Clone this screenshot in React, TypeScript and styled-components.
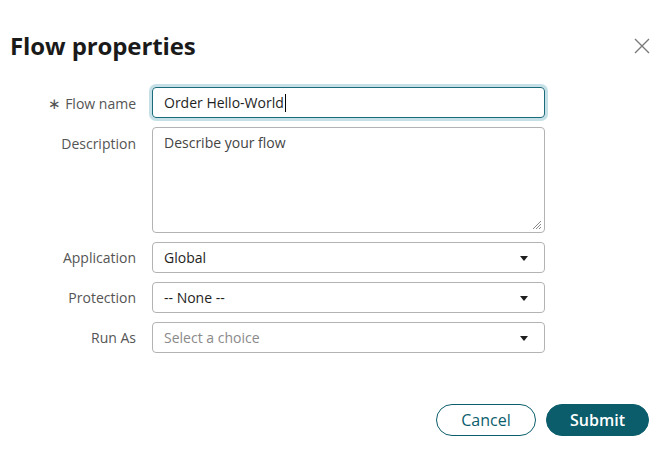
import React from "react";
import styled, {createGlobalStyle} from "styled-components";

const GlobalStyle = createGlobalStyle`
  body {
    margin: 0;
    background: #ffffff;
    font-family: 'Open Sans', 'Liberation Sans', sans-serif;
    color: #1e1e1e;
  }
`

const Dialog = styled.div`
  width: 669px;
  height: 456px;
  box-sizing: border-box;
  padding: 30px 20px 0 10px;
  display: flex;
  flex-direction: column;
`

const Header = styled.div`
  display: flex;
  justify-content: space-between;
  align-items: center;
  height: 30px;
`

const Title = styled.h1`
  margin: 0;
  font-size: 24px;
  font-weight: 700;
  color: #1a1a1a;
  letter-spacing: -0.1px;
`

const CloseButton = styled.button`
  border: none;
  background: transparent;
  padding: 0;
  width: 16px;
  height: 16px;
  margin-top: 2px;
  margin-right: -1px;
  cursor: pointer;
  display: flex;
`

const Form = styled.div`
  display: grid;
  grid-template-columns: 126px 393px;
  column-gap: 16px;
  row-gap: 9px;
  margin-top: 27px;
`

const Label = styled.label<{$top?: boolean}>`
  font-size: 14px;
  color: #555;
  text-align: right;
  align-self: ${p => p.$top ? 'start' : 'center'};
  padding-top: ${p => p.$top ? '7px' : '0'};
`

const Star = styled.span`
  font-size: 15px;
  margin-right: 4px;
  color: #555;
`

const TextInput = styled.div<{$focused?: boolean}>`
  height: 31px;
  box-sizing: border-box;
  border: 1px solid ${p => p.$focused ? '#1b6b7a' : '#b3b3b3'};
  border-radius: 4px;
  box-shadow: ${p => p.$focused ? '0 0 0 3px rgba(90, 170, 185, 0.35)' : 'none'};
  display: flex;
  align-items: center;
  padding: 0 11px;
  font-size: 14px;
  color: #1e1e1e;
`

const Caret = styled.span`
  display: inline-block;
  width: 1px;
  height: 18px;
  background: #000;
  margin-left: 1px;
`

const TextArea = styled.div`
  height: 106px;
  box-sizing: border-box;
  border: 1px solid #b3b3b3;
  border-radius: 4px;
  padding: 5px 11px;
  font-size: 14px;
  color: #444;
  position: relative;
`

const Grip = styled.svg`
  position: absolute;
  right: 2px;
  bottom: 2px;
`

const Select = styled.div<{$placeholder?: boolean}>`
  height: 31px;
  box-sizing: border-box;
  border: 1px solid #b3b3b3;
  border-radius: 4px;
  display: flex;
  align-items: center;
  justify-content: space-between;
  padding: 0 16px 0 11px;
  font-size: 14px;
  color: ${p => p.$placeholder ? '#8a8a8a' : '#1e1e1e'};
`

const Arrow = styled.span`
  width: 0;
  height: 0;
  border-left: 4.5px solid transparent;
  border-right: 4.5px solid transparent;
  border-top: 5px solid #1e1e1e;
  margin-top: 2px;
`

const Footer = styled.div`
  display: flex;
  justify-content: flex-end;
  gap: 10px;
  margin-top: 51px;
`

const Button = styled.button<{$primary?: boolean}>`
  height: 32px;
  box-sizing: border-box;
  padding: 0 23px;
  border-radius: 16px;
  font-family: 'Open Sans', 'Liberation Sans', sans-serif;
  font-size: 16px;
  font-weight: ${p => p.$primary ? 600 : 400};
  border: 1px solid #0b5d6c;
  background: ${p => p.$primary ? '#0b5d6c' : '#ffffff'};
  color: ${p => p.$primary ? '#ffffff' : '#0b5d6c'};
  cursor: pointer;
  min-width: ${p => p.$primary ? '103px' : '100px'};
`

const App = () => {
  return (
    <>
      <GlobalStyle/>
      <Dialog>
        <Header>
          <Title>Flow properties</Title>
          <CloseButton aria-label="Close">
            <svg width="16" height="16" viewBox="0 0 16 16">
              <path d="M1 1 L15 15 M15 1 L1 15" stroke="#7a7a7a" strokeWidth="1.4" fill="none"/>
            </svg>
          </CloseButton>
        </Header>

        <Form>
          <Label><Star>∗</Star>Flow name</Label>
          <TextInput $focused>Order Hello-World<Caret/></TextInput>

          <Label $top>Description</Label>
          <TextArea>
            Describe your flow
            <Grip width="10" height="10" viewBox="0 0 10 10">
              <path d="M9 1 L1 9 M9 4 L4 9 M9 7 L7 9" stroke="#8a8a8a" strokeWidth="1" fill="none"/>
            </Grip>
          </TextArea>

          <Label>Application</Label>
          <Select>Global<Arrow/></Select>

          <Label>Protection</Label>
          <Select>-- None --<Arrow/></Select>

          <Label>Run As</Label>
          <Select $placeholder>Select a choice<Arrow/></Select>
        </Form>

        <Footer>
          <Button>Cancel</Button>
          <Button $primary>Submit</Button>
        </Footer>
      </Dialog>
    </>
  );
};

export default App;
